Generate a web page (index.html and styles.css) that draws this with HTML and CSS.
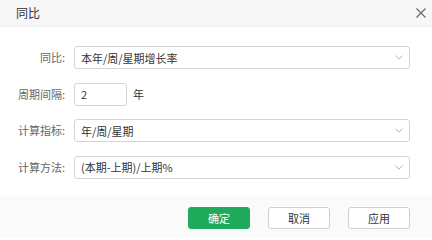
FILE: index.html
```html
<!DOCTYPE html>
<html lang="zh">
<head>
<meta charset="utf-8">
<link rel="stylesheet" href="styles.css">
</head>
<body>
<div class="dialog">
  <div class="header">
    <span class="title">同比</span>
    <svg class="close" width="10" height="10" viewBox="0 0 10 10"><path d="M0.5 0.5L9.5 9.5M9.5 0.5L0.5 9.5" stroke="#666" stroke-width="1.1" fill="none"/></svg>
  </div>
  <div class="body">
    <div class="row">
      <label class="label">同比:</label>
      <div class="select"><span>本年/周/星期增长率</span><svg class="chev" width="8" height="5" viewBox="0 0 8 5"><path d="M0.5 0.5L4 4.2L7.5 0.5" stroke="#b5b5b5" stroke-width="1" fill="none"/></svg></div>
    </div>
    <div class="row">
      <label class="label">周期间隔:</label>
      <div class="input"><span>2</span></div>
      <span class="unit">年</span>
    </div>
    <div class="row">
      <label class="label">计算指标:</label>
      <div class="select"><span>年/周/星期</span><svg class="chev" width="8" height="5" viewBox="0 0 8 5"><path d="M0.5 0.5L4 4.2L7.5 0.5" stroke="#b5b5b5" stroke-width="1" fill="none"/></svg></div>
    </div>
    <div class="row">
      <label class="label">计算方法:</label>
      <div class="select"><span>(本期-上期)/上期%</span><svg class="chev" width="8" height="5" viewBox="0 0 8 5"><path d="M0.5 0.5L4 4.2L7.5 0.5" stroke="#b5b5b5" stroke-width="1" fill="none"/></svg></div>
    </div>
  </div>
  <div class="footer">
    <button class="btn primary">确定</button>
    <button class="btn">取消</button>
    <button class="btn">应用</button>
  </div>
</div>
</body>
</html>
```
FILE: styles.css
```css
html, body {
  margin: 0;
  padding: 0;
  background: #fff;
}
body {
  font-family: "Noto Sans CJK SC", "Noto Sans", sans-serif;
  font-size: 11px;
  color: #333;
}
.dialog {
  width: 432px;
  height: 238px;
  display: flex;
  flex-direction: column;
  background: #fff;
}
.header {
  height: 27px;
  box-sizing: border-box;
  background: #f7f7f7;
  border-bottom: 1px solid #f0f0f0;
  display: flex;
  align-items: center;
  justify-content: space-between;
  padding: 0 6px 0 16px;
}
.title {
  font-size: 12px;
  color: #333;
  line-height: 1;
}
.close {
  display: block;
  margin-top: 0;
}
.body {
  flex: 1;
  padding: 19px 22px 0 0;
  display: flex;
  flex-direction: column;
  gap: 13.5px;
}
.row {
  display: flex;
  align-items: center;
  height: 23px;
}
.label {
  width: 65px;
  text-align: right;
  color: #666;
  margin-right: 9px;
  flex: none;
  line-height: 1;
}
.select, .input {
  box-sizing: border-box;
  height: 23px;
  border: 1px solid #d4d4d4;
  border-radius: 3px;
  display: flex;
  align-items: center;
  padding: 0 6px;
  color: #333;
  background: #fff;
}
.select {
  flex: 1;
  justify-content: space-between;
  padding-right: 6px;
}
.chev {
  display: block;
}
.input {
  width: 53px;
}
.unit {
  margin-left: 6px;
  color: #333;
}
.footer {
  height: 42px;
  box-sizing: border-box;
  background: #fafafa;
  display: flex;
  justify-content: flex-end;
  align-items: flex-start;
  padding: 11px 22px 0 0;
  gap: 18px;
}
.btn {
  width: 62px;
  height: 22px;
  box-sizing: border-box;
  border: 1px solid #cfcfcf;
  border-radius: 3px;
  background: #fff;
  color: #333;
  font-family: inherit;
  font-size: 11px;
  padding: 0;
  line-height: 1;
}
.btn.primary {
  background: #1fab5b;
  border-color: #1fab5b;
  color: #fff;
}
```
